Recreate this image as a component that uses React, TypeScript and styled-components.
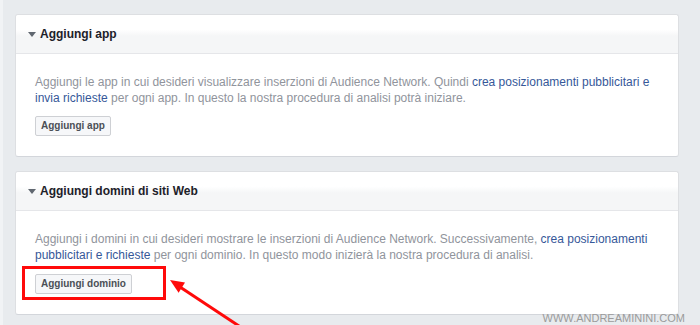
import React from "react";
import styled, { createGlobalStyle } from "styled-components";

const GlobalStyle = createGlobalStyle`
  html, body {
    margin: 0;
    padding: 0;
    height: 100%;
  }
  body {
    background: linear-gradient(to right, #f1f3f5 3px, #e8ebee 3px);
    font-family: "Liberation Sans", Arial, Helvetica, sans-serif;
    overflow: hidden;
  }
`;

const Page = styled.div`
  position: relative;
  height: 325px;
  box-sizing: border-box;
  padding: 14px 21px 0 15px;
  display: flex;
  flex-direction: column;
  gap: 14px;
`;

const Card = styled.section`
  background: #fff;
  border: 1px solid #dddfe2;
  border-bottom-color: #d3d6db;
  border-radius: 3px;
  overflow: visible;
`;

const CardHeader = styled.div`
  height: 38px;
  display: flex;
  align-items: center;
  gap: 4px;
  padding-left: 12px;
  background: linear-gradient(#ffffff 0%, #ffffff 38%, #f5f6f7 55%, #f5f6f7 100%);
  border-bottom: 1px solid #e5e6e9;
  border-radius: 3px 3px 0 0;
`;

const Caret = styled.span`
  width: 0;
  height: 0;
  border-left: 4px solid transparent;
  border-right: 4px solid transparent;
  border-top: 5px solid #606770;
`;

const Title = styled.h2`
  margin: 0;
  font-size: 12px;
  font-weight: bold;
  color: #1d2129;
  line-height: 16px;
`;

const CardBody = styled.div`
  padding: 20px 20px 20px 19px;
`;

const Description = styled.p`
  margin: 0;
  font-size: 12px;
  line-height: 16px;
  color: #90949c;
`;

const Link = styled.a`
  color: #365899;
  text-decoration: none;
`;

const ButtonRow = styled.div`
  margin-top: 10px;
  display: flex;
`;

const ButtonWrap = styled.div`
  position: relative;
`;

const Button = styled.button`
  height: 20px;
  padding: 0 5px;
  border: 1px solid #ced0d4;
  border-radius: 2px;
  background: #f6f7f9;
  color: #4b4f56;
  font-family: "Liberation Sans", Arial, Helvetica, sans-serif;
  font-size: 10px;
  font-weight: bold;
  line-height: 18px;
  cursor: pointer;
`;

const Highlight = styled.div`
  position: absolute;
  left: -13px;
  top: -7px;
  width: 144px;
  height: 34px;
  box-sizing: border-box;
  border: 3px solid #ff0a0a;
  pointer-events: none;
`;

const Arrow = styled.svg`
  position: absolute;
  left: 0;
  top: 0;
  pointer-events: none;
`;

const Watermark = styled.div`
  position: absolute;
  right: 15px;
  bottom: 0;
  font-size: 11px;
  line-height: 13px;
  color: #9b9b9b;
  font-family: "Liberation Sans", Arial, sans-serif;
`;

export default function App() {
  return (
    <>
      <GlobalStyle />
      <Page>
        <Card>
          <CardHeader>
            <Caret />
            <Title>Aggiungi app</Title>
          </CardHeader>
          <CardBody>
            <Description>
              Aggiungi le app in cui desideri visualizzare inserzioni di Audience Network. Quindi{" "}
              <Link href="#">crea posizionamenti pubblicitari e invia richieste</Link> per ogni app.
              In questo la nostra procedura di analisi potrà iniziare.
            </Description>
            <ButtonRow>
              <Button>Aggiungi app</Button>
            </ButtonRow>
          </CardBody>
        </Card>
        <Card>
          <CardHeader>
            <Caret />
            <Title>Aggiungi domini di siti Web</Title>
          </CardHeader>
          <CardBody>
            <Description>
              Aggiungi i domini in cui desideri mostrare le inserzioni di Audience Network.
              Successivamente, <Link href="#">crea posizionamenti pubblicitari e richieste</Link> per
              ogni dominio. In questo modo inizierà la nostra procedura di analisi.
            </Description>
            <ButtonRow>
              <ButtonWrap>
                <Button>Aggiungi dominio</Button>
                <Highlight />
              </ButtonWrap>
            </ButtonRow>
          </CardBody>
        </Card>
        <Arrow width="700" height="325" viewBox="0 0 700 325">
          <line x1="242" y1="328" x2="180" y2="287" stroke="#ff0a0a" strokeWidth="3" />
          <polygon points="170,280 185,282.6 178.6,292.7" fill="#ff0a0a" />
        </Arrow>
        <Watermark>WWW.ANDREAMININI.COM</Watermark>
      </Page>
    </>
  );
}
